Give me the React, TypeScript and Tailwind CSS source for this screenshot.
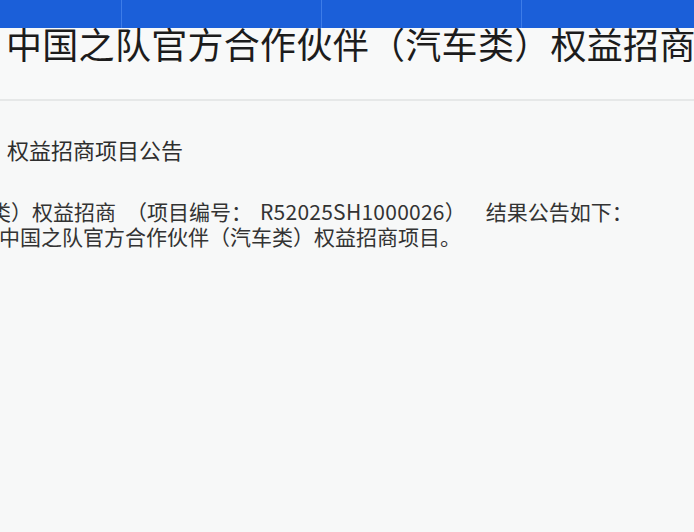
const cjk = "font-['Noto_Sans_CJK_SC','Noto_Sans',sans-serif]";

function TopBar() {
  return (
    <div className="flex h-[28px] bg-[#1b5fd9]">
      <div className="w-[122px] border-r border-[#3d7ce8]" />
      <div className="w-[200px] border-r border-[#3d7ce8]" />
      <div className="w-[200px] border-r border-[#3d7ce8]" />
      <div className="flex-1" />
    </div>
  );
}

export default function App() {
  return (
    <div className={`h-[532px] w-[694px] overflow-hidden bg-[#f7f8f8] ${cjk}`}>
      <TopBar />

      <header className="h-[73px] border-b-2 border-[#e6e8e8] bg-[#f8f9f9]">
        <h1 className="ml-[6px] whitespace-nowrap text-[36px] leading-[31px] font-normal tracking-[0.3px] text-[#1c1c1c]">
          中国之队官方合作伙伴（汽车类）权益招商项目结果公告
        </h1>
      </header>

      <section className="pt-[35px] text-[#2e2e2e]">
        <h2 className="ml-[7px] whitespace-nowrap text-[22px] leading-[26px] font-normal">
          权益招商项目公告
        </h2>

        <div className="mt-[37px] text-[21px] leading-[25px] text-[#333]">
          <p className="ml-[-10px] whitespace-nowrap">
            类）权益招商
            <span className="ml-[10px]">（项目编号：</span>
            <span className="ml-[8px] tracking-[0.25px]">R52025SH1000026</span>
            <span>）</span>
            <span className="ml-[20px]">结果公告如下：</span>
          </p>
          <p className="ml-[-1px] whitespace-nowrap">
            中国之队官方合作伙伴（汽车类）权益招商项目。
          </p>
        </div>
      </section>
    </div>
  );
}
